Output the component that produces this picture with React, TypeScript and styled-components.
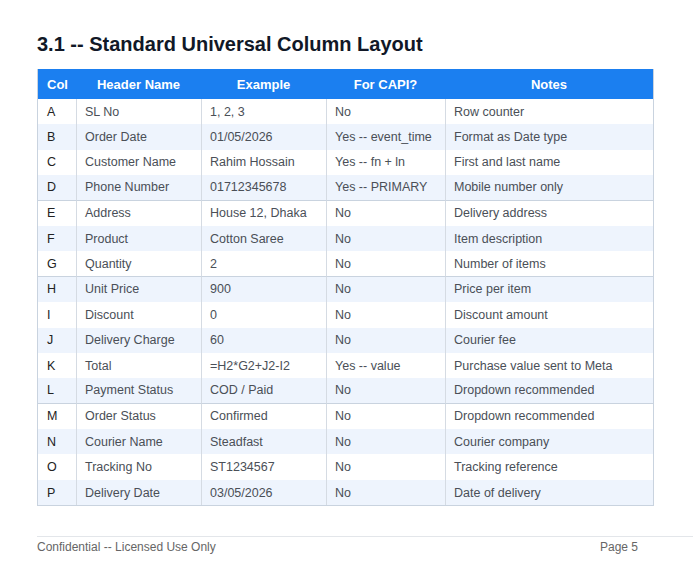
import styled, { createGlobalStyle } from 'styled-components'

const Global = createGlobalStyle`
  body { margin: 0; background: #fff; font-family: "Liberation Sans", Arial, sans-serif; }
`

const Page = styled.div`
  width: 693px;
  height: 586px;
  padding: 32px 0 0 37px;
  box-sizing: border-box;
  display: flex;
  flex-direction: column;
`

const Title = styled.h1`
  margin: 0 0 13px;
  font-size: 20px;
  font-weight: bold;
  color: #111827;
  line-height: 24px;
`

const Table = styled.div`
  width: 615px;
  border: 1px solid #c9d3df;
  border-top: none;
  display: grid;
  grid-template-columns: 38px 125px 125px 119px 1fr;
`

const Head = styled.div<{ $align?: string }>`
  background: #1b7ff0;
  color: #fff;
  font-weight: bold;
  font-size: 13px;
  height: 30px;
  display: flex;
  align-items: center;
  justify-content: ${p => p.$align || 'center'};
  padding-left: ${p => (p.$align ? '9px' : '0')};
`

const Cell = styled.div<{ $alt: boolean; $first?: boolean; $strong?: boolean }>`
  background: ${p => (p.$alt ? '#eef4fd' : '#fff')};
  height: ${p => (p.$strong ? '24.4px' : '25.4px')};
  border-bottom: ${p => (p.$strong ? '1px solid #c9d3df' : 'none')};
  display: flex;
  align-items: center;
  padding-left: ${p => (p.$first ? '9px' : '8px')};
  font-size: 12.5px;
  color: ${p => (p.$first ? '#222' : '#4a4f57')};
  border-left: ${p => (p.$first ? 'none' : '1px solid #d5dbe3')};
  white-space: nowrap;
`

const Footer = styled.div`
  margin-top: auto;
  margin-bottom: 32px;
  border-top: 1px solid #e3e6ea;
  padding: 3px 55px 0 0;
  display: flex;
  justify-content: space-between;
  font-size: 12px;
  color: #666;
`

const rows = [
  ['A', 'SL No', '1, 2, 3', 'No', 'Row counter'],
  ['B', 'Order Date', '01/05/2026', 'Yes -- event_time', 'Format as Date type'],
  ['C', 'Customer Name', 'Rahim Hossain', 'Yes -- fn + ln', 'First and last name'],
  ['D', 'Phone Number', '01712345678', 'Yes -- PRIMARY', 'Mobile number only'],
  ['E', 'Address', 'House 12, Dhaka', 'No', 'Delivery address'],
  ['F', 'Product', 'Cotton Saree', 'No', 'Item description'],
  ['G', 'Quantity', '2', 'No', 'Number of items'],
  ['H', 'Unit Price', '900', 'No', 'Price per item'],
  ['I', 'Discount', '0', 'No', 'Discount amount'],
  ['J', 'Delivery Charge', '60', 'No', 'Courier fee'],
  ['K', 'Total', '=H2*G2+J2-I2', 'Yes -- value', 'Purchase value sent to Meta'],
  ['L', 'Payment Status', 'COD / Paid', 'No', 'Dropdown recommended'],
  ['M', 'Order Status', 'Confirmed', 'No', 'Dropdown recommended'],
  ['N', 'Courier Name', 'Steadfast', 'No', 'Courier company'],
  ['O', 'Tracking No', 'ST1234567', 'No', 'Tracking reference'],
  ['P', 'Delivery Date', '03/05/2026', 'No', 'Date of delivery'],
]

const strongAfter = ['D', 'G', 'L']

export default function App() {
  return (
    <Page>
      <Global />
      <Title>3.1 -- Standard Universal Column Layout</Title>
      <Table>
        <Head $align="flex-start">Col</Head>
        <Head>Header Name</Head>
        <Head>Example</Head>
        <Head>For CAPI?</Head>
        <Head>Notes</Head>
        {rows.map((r, i) =>
          r.map((c, j) => (
            <Cell key={`${i}-${j}`} $alt={i % 2 === 1} $first={j === 0} $strong={strongAfter.includes(r[0])}>
              {c}
            </Cell>
          ))
        )}
      </Table>
      <Footer>
        <span>Confidential -- Licensed Use Only</span>
        <span>Page 5</span>
      </Footer>
    </Page>
  )
}
